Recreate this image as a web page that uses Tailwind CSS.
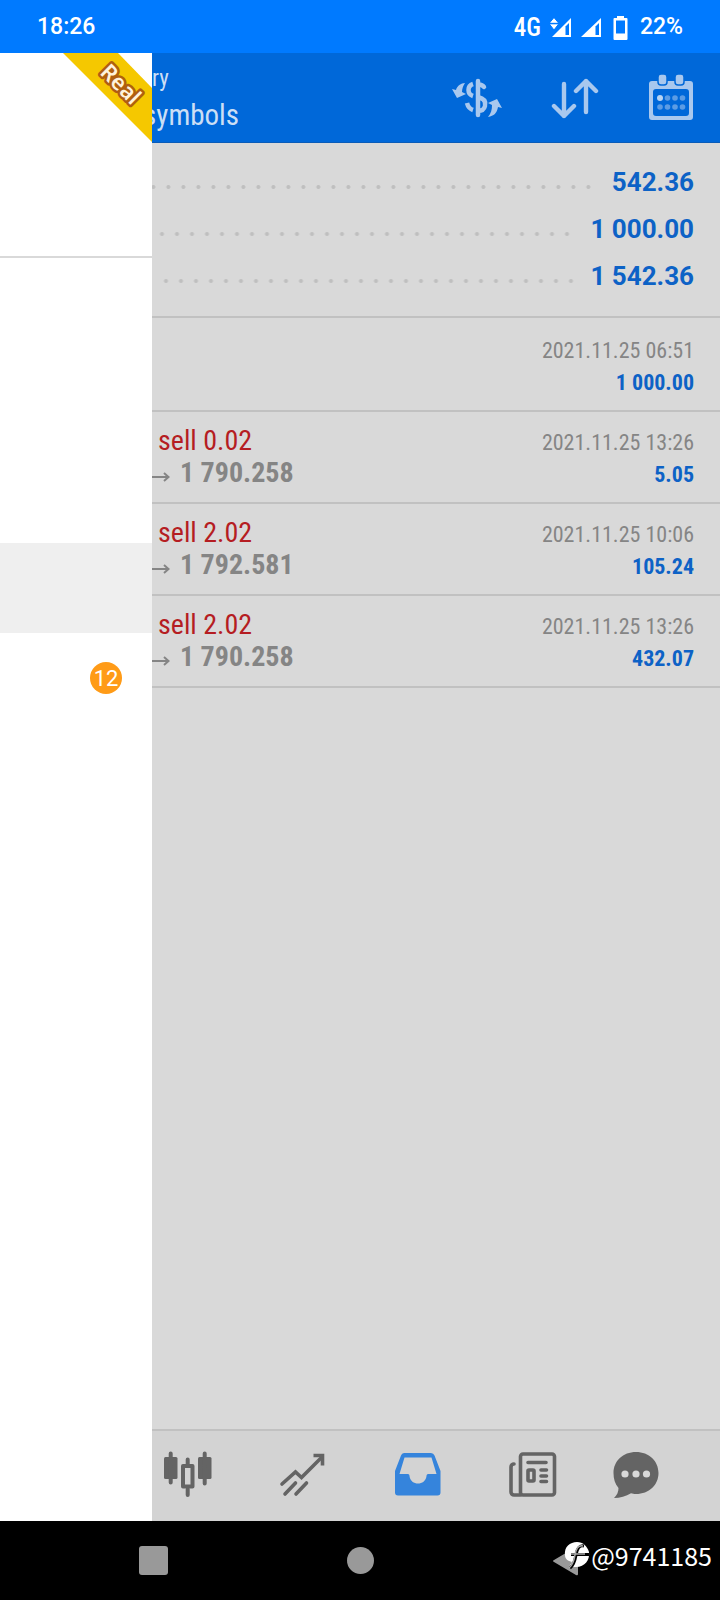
<!DOCTYPE html>
<html lang="en">
<head>
<meta charset="utf-8">
<meta name="viewport" content="width=device-width, initial-scale=1">
<title>History</title>
<script src="https://cdn.jsdelivr.net/npm/@tailwindcss/browser@4"></script>
</head>
<body class="flex min-h-screen flex-col bg-black font-[Roboto,sans-serif]">

<!-- Status bar -->
<div class="flex h-[53px] items-center justify-between bg-[#007aff] pt-[2px] pr-[37px] pl-[37px] text-[23px] font-medium text-white">
  <span>18:26</span>
  <div class="flex items-center">
    <span class="mr-[9px] font-['Roboto_Condensed','Liberation_Sans_Narrow',Roboto,sans-serif] text-[25px]">4G</span>
    <svg class="mr-2.5 h-5 w-[21px]" viewBox="0 0 21 20" fill="#fff" aria-label="Mobile data"><path d="M2 19 21 0v19z"/><path fill="#007aff" d="M15.500 8.500l3.500-3.500V17h-3.500z"/><path stroke="#007aff" stroke-width="1" d="M4-.5 9 5.500 4 12-1 5.500z"/><path fill="#007aff" d="M0 4.800h9v1.500H0z"/></svg>
    <svg class="mr-3 h-5 w-[20px]" viewBox="0 0 20 20" fill="#fff" aria-label="Signal"><path d="M0 19 20 0v19z"/><path fill="#007aff" d="M14.500 8.500l3.500-3.500V17h-3.500z"/></svg>
    <svg class="mr-3 h-6 w-[15px]" viewBox="0 0 15 24" fill="#fff" aria-label="Battery"><path fill-rule="evenodd" d="M4 0h7v2h2.500A1 1 0 0 1 14.500 3v20a1 1 0 0 1-1 1h-12a1 1 0 0 1-1-1V3a1 1 0 0 1 1-1H4zM3 4.500V17.500h9V4.500z"/></svg>
    <span>22%</span>
  </div>
</div>

<div class="flex flex-1">
  <!-- Drawer -->
  <aside class="flex w-[152px] shrink-0 flex-col bg-white">
    <div class="flex h-[205px] justify-end border-b-2 border-[#d9d9d9]">
      <svg class="h-[90px] w-[90px]" viewBox="0 0 90 90" role="img" aria-label="Real account">
        <path fill="#f5c800" d="M1 0h55l34 35v54z"/>
        <text x="0" y="8" transform="translate(59 31) rotate(45)" text-anchor="middle" font-family="Noto Sans, sans-serif" font-size="22" font-weight="600" fill="#fff2dc" stroke="#b05e10" stroke-width="5" stroke-linejoin="round" paint-order="stroke">Real</text>
      </svg>
    </div>
    <nav class="flex flex-col pt-[285px]" aria-label="Menu">
      <button class="h-[90px] bg-[#efefef]" aria-label="History"></button>
      <button class="flex h-[90px] items-center justify-end pr-[30px]" aria-label="Mailbox, 12 unread">
        <span class="flex h-8 w-8 items-center justify-center rounded-full bg-[#ff9b17] text-[22px] text-white">12</span>
      </button>
    </nav>
  </aside>

  <div class="flex min-w-0 flex-1 flex-col bg-[#d9d9d9]">
    <header class="flex h-[90px] items-center justify-between border-b border-[#0a5cb8] bg-[#0068d9] pr-[26px] font-['Roboto_Condensed','Liberation_Sans_Narrow',Roboto,sans-serif] text-[#ccdff5]">
      <div class="flex flex-col pt-0.5">
        <span class="text-[23px] leading-8">ry</span>
        <h1 class="flex w-[87px] justify-end overflow-hidden text-[29px] leading-10">symbols</h1>
      </div>
      <div class="flex items-center gap-[49px]">
        <button aria-label="Filter by symbol">
          <svg class="h-[46px] w-[50px]" viewBox="0 0 50 46" fill="none" stroke="#a9c8ee" stroke-width="4.500" stroke-linecap="round" stroke-linejoin="round">
            <path d="M26 6v34M32 12c-2-3-5-2.500-6-2.500M33 30c1-5-3-7-7-8M33 31c-1 4-4 5-7 5"/>
            <path stroke-linecap="butt" d="M21 9c-6 2-6 10 0 12M15 28c1 4 3 6 6 7"/>
            <path stroke="none" fill="#a9c8ee" d="M13 8c-4 0-8 3-9 7l-4-1 5 9 9-4-4-2c0-3 1-6 3-9zM36 42c6-1 9-4 10-10l4 1-5-9-9 4 4 2c0 5-1 8-4 12z"/>
          </svg>
        </button>
        <button aria-label="Sort">
          <svg class="h-[46px] w-[48px]" viewBox="0 0 48 46" fill="none" stroke="#a9c8ee" stroke-width="4.400" stroke-linecap="round" stroke-linejoin="round"><path d="M13 9v32M3 31l10 10 10-10M35 37V6M25 16 35 6l10 10"/></svg>
        </button>
        <button aria-label="Choose period">
          <svg class="h-[48px] w-[46px]" viewBox="0 0 46 48" fill="#a9c8ee"><path fill-rule="evenodd" d="M4 7h38a3 3 0 0 1 3 3v33a3 3 0 0 1-3 3H4a3 3 0 0 1-3-3V10a3 3 0 0 1 3-3zM8 15a3 3 0 0 0-3 3v21a3 3 0 0 0 3 3h30a3 3 0 0 0 3-3V18a3 3 0 0 0-3-3z"/><g stroke="#0068d9" stroke-width="1.500"><rect x="10" y="0" width="9" height="11" rx="3"/><rect x="27" y="0" width="9" height="11" rx="3"/></g><circle cx="12" cy="24" r="3" fill="#b8d4f2"/><g fill="#5c9ce4"><circle cx="19.500" cy="24" r="2.800"/><circle cx="27" cy="24" r="2.800"/><circle cx="34.500" cy="24" r="2.800"/><circle cx="12" cy="33" r="2.800"/><circle cx="19.500" cy="33" r="2.800"/><circle cx="27" cy="33" r="2.800"/><circle cx="34.500" cy="33" r="2.800"/></g></svg>
        </button>
      </div>
    </header>

    <main class="flex-1">
      <!-- Totals with dot leaders -->
      <section class="border-b-2 border-[#c1c1c1] pt-4 pr-[26px] pb-4 text-[26px] leading-[47px] font-bold text-[#0d62c6]">
        <div class="flex items-center"><i class="mt-2 mr-4 h-1 flex-1 bg-[radial-gradient(circle,#bfbfbf_1.5px,transparent_2.5px)] bg-[size:15px_4px] bg-right bg-repeat-x"></i><span>542.36</span></div>
        <div class="flex items-center"><i class="mt-2 mr-4 ml-1 h-1 flex-1 bg-[radial-gradient(circle,#bfbfbf_1.5px,transparent_2.5px)] bg-[size:15px_4px] bg-right bg-repeat-x"></i><span>1 000.00</span></div>
        <div class="flex items-center"><i class="mt-2 mr-3 ml-1 h-1 flex-1 bg-[radial-gradient(circle,#bfbfbf_1.5px,transparent_2.5px)] bg-[size:15px_4px] bg-right bg-repeat-x"></i><span>1 542.36</span></div>
      </section>

      <!-- Deals -->
      <ul class="font-['Roboto_Condensed','Liberation_Sans_Narrow',Roboto,sans-serif] leading-8">
        <li class="flex justify-end border-b-2 border-[#c1c1c1] pt-[17px] pr-[26px] pb-[11px]">
          <div class="text-right text-[22px]"><p class="text-[#858585]">2021.11.25 06:51</p><p class="font-bold text-[#0d62c6]">1 000.00</p></div>
        </li>
        <li class="flex justify-between border-b-2 border-[#c1c1c1] pt-[13px] pr-[26px] pb-[11px]">
          <div class="text-[28px]"><p class="pl-1.5 text-[#b51d22]">sell 0.02</p><p class="flex items-center gap-2.5 font-bold text-[#858585]"><svg class="mt-2 h-3 w-[18px]" viewBox="0 0 18 12" fill="none" stroke="#858585" stroke-width="2" aria-label="to"><path d="M0 6h16M12 2 16.500 6 12 10"/></svg>1 790.258</p></div>
          <div class="pt-0.5 text-right text-[22px]"><p class="text-[#858585]">2021.11.25 13:26</p><p class="font-bold text-[#0d62c6]">5.05</p></div>
        </li>
        <li class="flex justify-between border-b-2 border-[#c1c1c1] pt-[13px] pr-[26px] pb-[11px]">
          <div class="text-[28px]"><p class="pl-1.5 text-[#b51d22]">sell 2.02</p><p class="flex items-center gap-2.5 font-bold text-[#858585]"><svg class="mt-2 h-3 w-[18px]" viewBox="0 0 18 12" fill="none" stroke="#858585" stroke-width="2" aria-label="to"><path d="M0 6h16M12 2 16.500 6 12 10"/></svg>1 792.581</p></div>
          <div class="pt-0.5 text-right text-[22px]"><p class="text-[#858585]">2021.11.25 10:06</p><p class="font-bold text-[#0d62c6]">105.24</p></div>
        </li>
        <li class="flex justify-between border-b-2 border-[#c1c1c1] pt-[13px] pr-[26px] pb-[11px]">
          <div class="text-[28px]"><p class="pl-1.5 text-[#b51d22]">sell 2.02</p><p class="flex items-center gap-2.5 font-bold text-[#858585]"><svg class="mt-2 h-3 w-[18px]" viewBox="0 0 18 12" fill="none" stroke="#858585" stroke-width="2" aria-label="to"><path d="M0 6h16M12 2 16.500 6 12 10"/></svg>1 790.258</p></div>
          <div class="pt-0.5 text-right text-[22px]"><p class="text-[#858585]">2021.11.25 13:26</p><p class="font-bold text-[#0d62c6]">432.07</p></div>
        </li>
      </ul>
    </main>

    <!-- Tabs -->
    <nav class="flex h-[92px] items-center gap-[67px] border-t-2 border-[#c1c1c1] bg-[#d3d3d3] pl-3 pb-1" aria-label="Sections">
      <button aria-label="Quotes"><svg class="size-12" viewBox="0 0 48 48" fill="#646464"><rect x="0" y="7" width="13.500" height="22" rx="1.500"/><rect x="34" y="7" width="13.500" height="22" rx="1.500"/><path stroke="#646464" stroke-width="4" stroke-linecap="round" d="M6.700 3.500v29M40.700 3.500v30M23.700 9.500v6M23.700 39v6"/><rect x="19" y="16" width="9.500" height="20.500" fill="none" stroke="#646464" stroke-width="4" stroke-linejoin="round"/></svg></button>
      <button aria-label="Charts"><svg class="size-12" viewBox="0 0 48 48" fill="none" stroke="#646464" stroke-width="3.600" stroke-linecap="round"><path d="M3 34 16.500 22l6 5.500L43 7M6 44l10.500-11M17 44l10.500-11"/><path stroke-linecap="butt" d="M34.500 5.500H43.500v10"/></svg></button>
      <button aria-label="History"><svg class="size-12" viewBox="0 0 48 48" fill="#3584dc"><path fill-rule="evenodd" d="M10 3h27a4 4 0 0 1 3.500 2.500L46.500 21v21.500a3 3 0 0 1-3 3H4a3 3 0 0 1-3-3V21L7 5.500A4 4 0 0 1 10 3zM10.500 7.500 5.500 24H13a2 2 0 0 1 2.500 2c1 10 16 10 17 0a2 2 0 0 1 2.500-2h7.500l-5-16.500z"/></svg></button>
      <button aria-label="News"><svg class="size-12" viewBox="0 0 48 48" fill="none" stroke="#646464" stroke-width="3.600"><rect x="11.500" y="4" width="34" height="41" rx="2.500"/><path stroke-linecap="round" d="M11.500 45H5a3 3 0 0 1-3-3V17a3 3 0 0 1 3-3M19 12.500h18M32 20h5.500M32 26h5.500M32 31.500h5.500"/><rect x="19" y="20" width="6" height="11" rx="1"/></svg></button>
      <button class="-ml-3" aria-label="Messages"><svg class="size-12" viewBox="0 0 48 48" fill="#646464"><path d="M24 2c13 0 22.500 9 22.500 21S37 44 24 44c-2 0-3.500-.3-5-.7C14 46.500 8 48 2 48c3-3 4.500-6 4.500-10C3 34 1.500 29 1.500 23 1.500 11 11 2 24 2z"/><g fill="#d9d9d9"><circle cx="13" cy="24" r="3.600"/><circle cx="24" cy="24" r="3.600"/><circle cx="34.500" cy="24" r="3.600"/></g></svg></button>
    </nav>
  </div>
</div>

<!-- System navigation -->
<footer class="relative flex h-[79px] items-center justify-between bg-black pr-[140px] pl-[139px]">
  <button class="size-[29px] rounded-[3px] bg-[#999]" aria-label="Recent apps"></button>
  <button class="size-[27px] rounded-full bg-[#999]" aria-label="Home"></button>
  <button aria-label="Back"><svg class="h-8 w-7" viewBox="0 0 28 32" fill="#999"><path d="M2 15 24 2q2-1 2 1v26q0 2-2 1L2 17q-2-1 0-2z"/></svg></button>
  <div class="absolute top-4 right-2 flex items-center text-white">
    <svg class="h-[30px] w-[28px]" viewBox="0 0 28 30" aria-hidden="true"><path fill="#000" d="M13 20h9v9h-3z"/><path fill="#fff" d="M2 15C1 7 7 2 14 2c6 0 10 4 12 10 1 8-4 15-13 15H6L9 22C5 21 2 19 2 15z"/><path fill="none" stroke="#000" stroke-width="3" d="M21 6c-5-1-7 3-8 9-1 6-2 10-6 13M8 14.500h18"/><path fill="none" stroke="#aaa" stroke-width="1.500" d="M20 6c-5-1-7 3-8 9-1 6-2 10-6 13M8 14h14"/></svg>
    <span class="font-['Noto_Sans_CJK_SC',sans-serif] text-[25px] leading-9">@9741185</span>
  </div>
</footer>
</body>
</html>
